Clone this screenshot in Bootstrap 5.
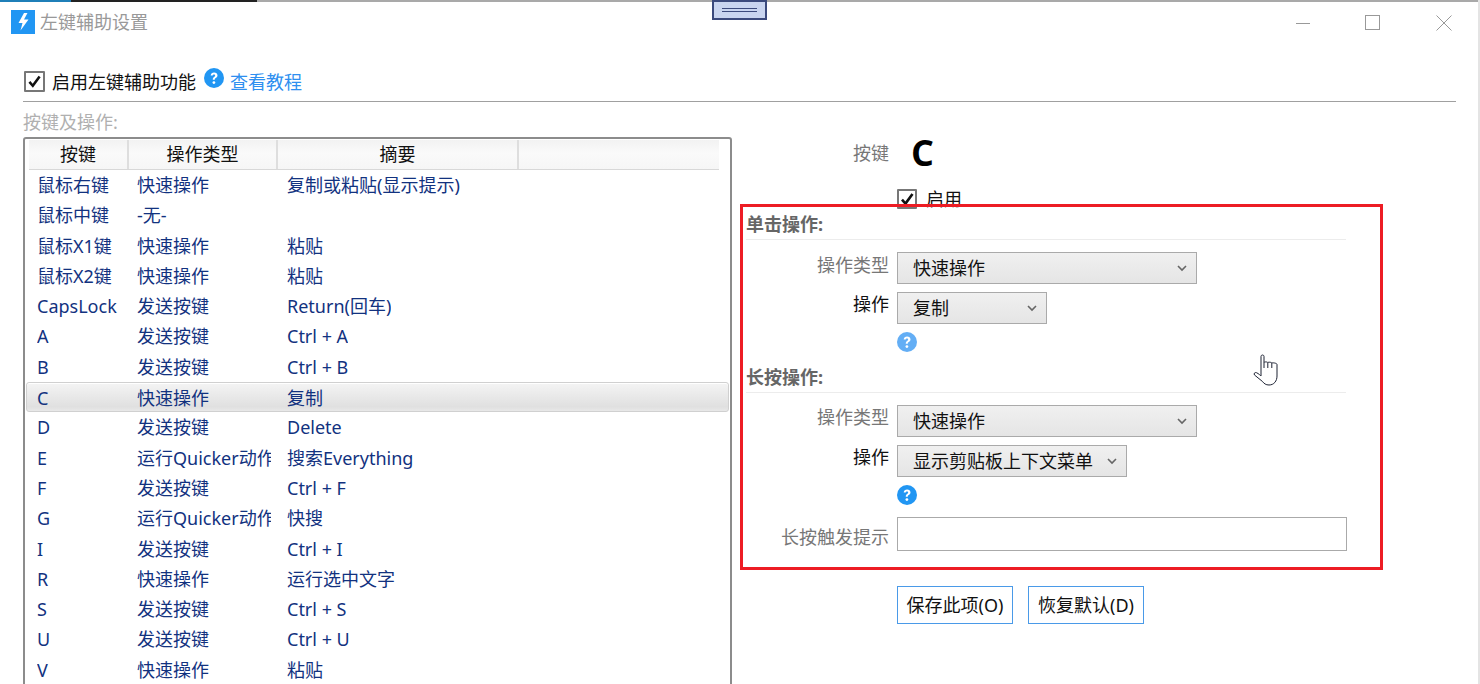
<!DOCTYPE html>
<html lang="zh-CN">
<head>
<meta charset="utf-8">
<title>左键辅助设置</title>
<link rel="stylesheet" href="https://cdn.jsdelivr.net/npm/bootstrap@5.3.0/dist/css/bootstrap.min.css">
<style>
html,body{height:684px;overflow:hidden;background:#fff}
body{font-family:"Noto Sans","Noto Sans CJK SC",sans-serif;font-size:18px;line-height:24px;color:#111;position:relative}
.topstrip{height:2px;background:#a9a9a9}
.topstrip i{display:block;float:left;height:2px}
.seg-a{width:71px;background:#1f7fb8}
.seg-b{width:186px;background:#222}
.dock-handle{position:absolute;left:712px;top:0;width:55px;height:20px;background:#c9d5f0;border:2px solid #3b4a7d;display:flex;flex-direction:column;justify-content:center;gap:2px;padding:0 8px}
.dock-handle span{height:1px;background:#3b4a7d}
.titlebar{height:40px;padding:8px 0 0 11px;margin-bottom:23px}
.app-logo{width:24px;height:24px;background:#2196f3;flex:none}
.win-title{color:#999;margin-left:5px;line-height:24px}
.win-btns{margin-left:auto;gap:55px;padding:5px 28px 0 0}
.topline{padding-left:24px;height:33px;margin-bottom:3px}
.chk-text{margin-left:7px}
.form-check-input.chk{width:21px;height:21px;margin:0;border:2px solid #777;border-radius:1px;flex:none;background-color:#fff;background-size:17px;background-image:url("data:image/svg+xml,%3Csvg xmlns='http://www.w3.org/2000/svg' viewBox='0 0 20 20'%3E%3Cpath d='M4 10.500l4 4.500 8-11' fill='none' stroke='%23111' stroke-width='3'/%3E%3C/svg%3E");opacity:1}
.help-top{margin-left:8px;margin-bottom:8px}
.tutorial{color:#2e8ff0;text-decoration:none;margin-left:6px}
.divider-line{height:1px;background:#a0a0a0;margin:0 24px 0 23px}
.sec-label{color:#b0b0b0;padding-left:23px;height:25px;line-height:40px}
.main-split{height:557px;padding-top:10px;overflow:hidden}
.listbox{width:709px;margin-left:23px;height:570px;border:2px solid #8c8c8c;border-radius:3px 3px 0 0;padding:1px 4px 0 4px;flex:none;overflow:hidden}
.lhead{display:flex;height:30px;width:690px;background:linear-gradient(#f2f2f2,#fafafa 45%,#f6f6f6);border-bottom:1px solid #d8d8d8}
.lhead div{text-align:center;border-right:2px solid #dedede;line-height:29px}
.c1{width:100px}.c2{width:149px}.c3{width:241px}
.lrow{display:flex;height:30.300px;line-height:30px;color:#12327f;padding-left:9px;white-space:nowrap;margin:0 -1px}
.lrow>span{overflow:hidden;display:block}
.k1{width:100px}.k2{width:134px;margin-right:16px}
.lrow.sel{background:linear-gradient(#f4f4f4,#e0e0e0 85%,#e8e8e8);border:1px solid #d0d0d0;border-radius:3px;box-shadow:inset 0 1px 0 #fff;margin:0 -3px;padding-left:10px}
.rpanel{margin-left:14px;width:610px;flex:none}
.keyrow{height:32px}
.lbl{width:143px;text-align:right;margin-right:8px;color:#777;flex:none}
.lbl.dark{color:#111}
.lbl.top2{margin-top:1px}
.lbl.top8{margin-top:8px}
.bigc{font-family:"Open Sans",sans-serif;font-weight:700;font-size:36px;line-height:32px;color:#000;margin-left:14px}
.enable-row{padding-left:151px;height:27px;margin-top:16px}
.enable-row .form-check-input.chk{width:20px;height:20px;margin-right:9px}
.grp-title{font-weight:700;color:#666;line-height:24px;height:28px;border-bottom:1px solid #ececec;width:600px}
.frow{display:flex;align-items:flex-start}
.first-row{margin-top:12px}
.next-row{margin-top:8px}
.input-row{margin-top:1px}
.combo.form-select{height:32px;padding:0 0 0 15px;font-size:18px;line-height:24px;border:1px solid #aaa;border-radius:0;color:#111;flex:none;font-family:inherit;background-color:#ececec;background-image:url("data:image/svg+xml,%3Csvg xmlns='http://www.w3.org/2000/svg' viewBox='0 0 10 7'%3E%3Cpath d='M1 1l4 4 4-4' fill='none' stroke='%23666' stroke-width='1.600'/%3E%3C/svg%3E"),linear-gradient(#f0f0f0,#e5e5e5);background-repeat:no-repeat;background-position:right 9px center,0 0;background-size:10px 7px,100% 100%}
.w300{width:300px}.w150{width:150px}.w230{width:230px}
.help-wrap{padding-left:151px;height:31px;margin-top:8px}
.help-wrap.tall{height:33px}
.help-wrap svg{display:block}
.txt-input.form-control{width:450px;height:34px;border:1px solid #aaa;border-radius:0}
.act-row{padding-left:151px;margin-top:35px}
.act-btn.btn{height:38px;width:116px;padding:0;border:1px solid #4a9ae8;border-radius:0;background:#fff;font-size:18px;color:#111;margin-right:15px;line-height:34px;white-space:nowrap}
.red-mark{position:absolute;left:740px;top:204px;width:643px;height:366px;border:3px solid #ed1c24;pointer-events:none}
.hand{position:absolute;left:1253px;top:353px}
.edge{position:absolute;right:0;top:0;width:2px;height:684px;background:#e4e4e4}
</style>
</head>
<body>
<div class="topstrip"><i class="seg-a"></i><i class="seg-b"></i></div>
<div class="dock-handle"><span></span><span></span></div>

<div class="titlebar d-flex">
  <div class="app-logo d-flex align-items-center justify-content-center">
    <svg width="24" height="24" viewBox="0 0 24 24"><path d="M13 3 7.500 13h4L9.500 20.500 17.500 9.500H13l3.500-6.500z" fill="#fff"/></svg>
  </div>
  <div class="win-title">左键辅助设置</div>
  <div class="win-btns d-flex">
    <svg width="16" height="16" viewBox="0 0 16 16"><path d="M2 8.500h14" stroke="#999" fill="none"/></svg>
    <svg width="16" height="16" viewBox="0 0 16 16"><rect x=".5" y=".5" width="14" height="14" fill="none" stroke="#999"/></svg>
    <svg width="16" height="16" viewBox="0 0 16 16"><path d="M.5.500l15 15M15.500.500l-15 15" stroke="#999" fill="none"/></svg>
  </div>
</div>

<div class="topline d-flex align-items-center">
  <input class="form-check-input chk" type="checkbox" checked aria-label="启用左键辅助功能">
  <span class="chk-text">启用左键辅助功能</span>
  <svg class="help-top" width="20" height="20" viewBox="0 0 20 20"><circle cx="10" cy="10" r="10" fill="#2196f3"/><path d="M6.700 7.600C6.800 5.600 8.200 4.500 10.100 4.500c2 0 3.400 1.100 3.400 2.900 0 1.300-.8 2-1.700 2.600-.8.500-1 .8-1 1.700H8.800c-.1-1.400.3-2.100 1.300-2.800.7-.5 1.100-.8 1.100-1.400 0-.7-.5-1.100-1.200-1.100-.8 0-1.300.5-1.300 1.200z" fill="#fff"/><circle cx="9.900" cy="14.600" r="1.400" fill="#fff"/></svg>
  <a class="tutorial" href="#">查看教程</a>
</div>
<div class="divider-line"></div>
<div class="sec-label">按键及操作:</div>

<div class="main-split d-flex">
  <div class="listbox">
    <div class="lhead"><div class="c1">按键</div><div class="c2">操作类型</div><div class="c3">摘要</div></div>
    <div class="lrow"><span class="k1">鼠标右键</span><span class="k2">快速操作</span><span>复制或粘贴(显示提示)</span></div>
    <div class="lrow"><span class="k1">鼠标中键</span><span class="k2">-无-</span><span></span></div>
    <div class="lrow"><span class="k1">鼠标X1键</span><span class="k2">快速操作</span><span>粘贴</span></div>
    <div class="lrow"><span class="k1">鼠标X2键</span><span class="k2">快速操作</span><span>粘贴</span></div>
    <div class="lrow"><span class="k1">CapsLock</span><span class="k2">发送按键</span><span>Return(回车)</span></div>
    <div class="lrow"><span class="k1">A</span><span class="k2">发送按键</span><span>Ctrl + A</span></div>
    <div class="lrow"><span class="k1">B</span><span class="k2">发送按键</span><span>Ctrl + B</span></div>
    <div class="lrow sel"><span class="k1">C</span><span class="k2">快速操作</span><span>复制</span></div>
    <div class="lrow"><span class="k1">D</span><span class="k2">发送按键</span><span>Delete</span></div>
    <div class="lrow"><span class="k1">E</span><span class="k2">运行Quicker动作</span><span>搜索Everything</span></div>
    <div class="lrow"><span class="k1">F</span><span class="k2">发送按键</span><span>Ctrl + F</span></div>
    <div class="lrow"><span class="k1">G</span><span class="k2">运行Quicker动作</span><span>快搜</span></div>
    <div class="lrow"><span class="k1">I</span><span class="k2">发送按键</span><span>Ctrl + I</span></div>
    <div class="lrow"><span class="k1">R</span><span class="k2">快速操作</span><span>运行选中文字</span></div>
    <div class="lrow"><span class="k1">S</span><span class="k2">发送按键</span><span>Ctrl + S</span></div>
    <div class="lrow"><span class="k1">U</span><span class="k2">发送按键</span><span>Ctrl + U</span></div>
    <div class="lrow"><span class="k1">V</span><span class="k2">快速操作</span><span>粘贴</span></div>
  </div>

  <div class="rpanel">
    <div class="keyrow d-flex align-items-center"><span class="lbl">按键</span><span class="bigc">C</span></div>
    <div class="enable-row d-flex align-items-center"><input class="form-check-input chk" type="checkbox" checked aria-label="启用"><span>启用</span></div>

    <div class="grp-title">单击操作:</div>
    <div class="frow first-row"><span class="lbl top2">操作类型</span><select class="combo form-select w300"><option>快速操作</option></select></div>
    <div class="frow next-row"><span class="lbl dark">操作</span><select class="combo form-select w150"><option>复制</option></select></div>
    <div class="help-wrap tall"><svg width="20" height="20" viewBox="0 0 20 20"><circle cx="10" cy="10" r="10" fill="#63aef5"/><path d="M6.700 7.600C6.800 5.600 8.200 4.500 10.100 4.500c2 0 3.400 1.100 3.400 2.900 0 1.300-.8 2-1.700 2.600-.8.500-1 .8-1 1.700H8.800c-.1-1.400.3-2.100 1.300-2.800.7-.5 1.100-.8 1.100-1.400 0-.7-.5-1.100-1.200-1.100-.8 0-1.300.5-1.300 1.200z" fill="#fff"/><circle cx="9.900" cy="14.600" r="1.400" fill="#fff"/></svg></div>

    <div class="grp-title">长按操作:</div>
    <div class="frow first-row"><span class="lbl">操作类型</span><select class="combo form-select w300"><option>快速操作</option></select></div>
    <div class="frow next-row"><span class="lbl dark">操作</span><select class="combo form-select w230"><option>显示剪贴板上下文菜单</option></select></div>
    <div class="help-wrap"><svg width="20" height="20" viewBox="0 0 20 20"><circle cx="10" cy="10" r="10" fill="#2196f3"/><path d="M6.700 7.600C6.800 5.600 8.200 4.500 10.100 4.500c2 0 3.400 1.100 3.400 2.900 0 1.300-.8 2-1.700 2.600-.8.500-1 .8-1 1.700H8.800c-.1-1.400.3-2.100 1.300-2.800.7-.5 1.100-.8 1.100-1.400 0-.7-.5-1.100-1.200-1.100-.8 0-1.300.5-1.300 1.200z" fill="#fff"/><circle cx="9.900" cy="14.600" r="1.400" fill="#fff"/></svg></div>
    <div class="frow input-row"><span class="lbl top8">长按触发提示</span><input class="txt-input form-control" type="text" aria-label="长按触发提示"></div>

    <div class="d-flex act-row">
      <button class="act-btn btn" type="button">保存此项(O)</button>
      <button class="act-btn btn" type="button">恢复默认(D)</button>
    </div>
  </div>
</div>

<div class="red-mark"></div>
<svg class="hand" width="26" height="34" viewBox="0 0 26 34"><path d="M8 20V3.500C8 1.500 11 1.500 11 3.500V9.500c0-.8 3.800-.8 3.800.2 0-.8 4-.6 4 .4 0-.6 5.200-.2 5.200 1.400V23c0 5-3 9-8 9-3.200 0-5-1.500-6.500-3.500L1.500 22c-1-1.300.2-3 2-2.300C5.500 20.500 8 23 8 23z" fill="#fff" stroke="#1d2233"/><path d="M11 9.500V15M14.800 9.700V15M18.800 10.100V15" fill="none" stroke="#1d2233"/></svg>
<div class="edge"></div>
<script src="https://cdn.jsdelivr.net/npm/bootstrap@5.3.0/dist/js/bootstrap.bundle.min.js"></script>
</body>
</html>
